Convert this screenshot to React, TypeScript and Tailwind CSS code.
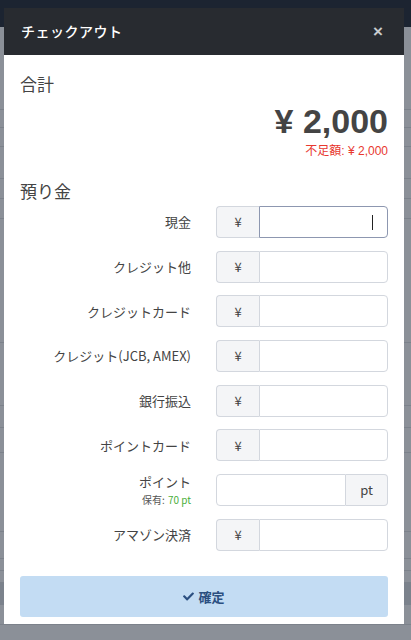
import React from 'react';

const font = { fontFamily: '"Noto Sans CJK JP", "Noto Sans", sans-serif' };

// backdrop rows (height in px) — page beneath the modal
const backdropRows = [83, 18, 19, 32, 20, 20, 124, 63, 22, 25, 79, 27, 12, 12];

const payments = [
  { label: 'クレジット他' },
  { label: 'クレジットカード' },
  { label: 'クレジット(JCB, AMEX)' },
  { label: '銀行振込' },
  { label: 'ポイントカード' },
];

function YenGroup({ focused = false }: { focused?: boolean }) {
  return (
    <div className="flex h-[32px] flex-1">
      <div className="flex w-[43px] items-center justify-center rounded-l-[4px] border border-r-0 border-[#d3d7de] bg-[#f4f5f7] text-[13px] text-[#444]">
        ¥
      </div>
      <div
        className={`flex flex-1 items-center justify-end rounded-r-[4px] border bg-white pr-[14px] ${
          focused ? 'border-[#8d97b0]' : 'border-[#d3d7de]'
        }`}
      >
        {focused && <span className="h-[15px] w-px bg-[#222]" />}
      </div>
    </div>
  );
}

function Row({ label, children }: { label: React.ReactNode; children: React.ReactNode }) {
  return (
    <div className="flex items-center gap-[25px]">
      <div className="w-[171px] text-right text-[13px] text-[#444]">{label}</div>
      {children}
    </div>
  );
}

export default function App() {
  return (
    <div className="relative h-[640px] w-[411px] overflow-hidden bg-[#8b9098]" style={font}>
      {/* page behind */}
      <div className="flex flex-col">
        <div className="h-[27px] bg-[#1c2431]" />
        {backdropRows.map((h, i) => (
          <div key={i} className="border-b border-[#7c828b]" style={{ height: h }} />
        ))}
        <div className="h-[22px] bg-[#7b828c]" />
        <div className="h-[20px] border-b border-[#7c828b]" />
      </div>

      {/* modal */}
      <div className="absolute left-[4px] top-[8px] flex h-[616px] w-[400px] flex-col bg-white">
        <div className="flex h-[47px] items-center justify-between bg-[#282b30] pl-[17px] pr-[21px]">
          <span className="text-[14px] font-medium tracking-[0.5px] text-white">チェックアウト</span>
          <span className="text-[17px] font-bold leading-none text-[#c9cbce]" style={{ fontFamily: '"Liberation Sans", sans-serif' }}>
            ×
          </span>
        </div>

        <div className="flex flex-col px-[16px] pt-[16px]">
          <div className="text-[17px] leading-[26px] text-[#444]">合計</div>
          <div
            className="mt-[6px] text-right text-[34px] font-bold leading-[36px] text-[#444]"
            style={{ fontFamily: '"Liberation Sans", "Noto Sans CJK JP", sans-serif' }}
          >
            ¥ 2,000
          </div>
          <div
            className="mt-[5px] text-right text-[12px] leading-[14px] text-[#e8382f]"
            style={{ fontFamily: '"Liberation Sans", "Noto Sans CJK JP", sans-serif' }}
          >
            不足額: ¥ 2,000
          </div>

          <div className="mt-[20px] text-[17px] leading-[26px] text-[#444]">預り金</div>

          <div className="mt-[2px] flex flex-col gap-[12.7px]">
            <Row label="現金">
              <YenGroup focused />
            </Row>
            {payments.map((p) => (
              <Row key={p.label} label={p.label}>
                <YenGroup />
              </Row>
            ))}
            <Row
              label={
                <div className="flex flex-col items-end gap-[3px]">
                  <div className="text-[13px] leading-[16px]">ポイント</div>
                  <div className="flex gap-[3px] text-[10px] leading-[13px]">
                    <div className="text-[#555]">保有:</div>
                    <div className="text-[#4caf3c]">70 pt</div>
                  </div>
                </div>
              }
            >
              <div className="flex h-[32px] flex-1">
                <div className="flex-1 rounded-l-[4px] border border-[#d3d7de] bg-white" />
                <div className="flex w-[42px] items-center justify-center rounded-r-[4px] border border-l-0 border-[#d3d7de] bg-[#f4f5f7] text-[13px] text-[#444]">
                  pt
                </div>
              </div>
            </Row>
            <Row label="アマゾン決済">
              <YenGroup />
            </Row>
          </div>

          <button className="mt-[25px] flex h-[41px] items-center justify-center gap-[4px] rounded-[3px] bg-[#c3dcf3] text-[13px] font-bold text-[#2b4f80]">
            <svg viewBox="0 0 512 512" className="h-[11px] w-[11px]" fill="currentColor">
              <path d="M173.9 439.4l-166.4-166.4c-10-10-10-26.2 0-36.2l36.2-36.2c10-10 26.2-10 36.2 0L192 312.7 432.1 72.6c10-10 26.2-10 36.2 0l36.2 36.2c10 10 10 26.2 0 36.2l-294.4 294.4c-10 10-26.2 10-36.2 0z" />
            </svg>
            確定
          </button>
        </div>
      </div>
    </div>
  );
}
